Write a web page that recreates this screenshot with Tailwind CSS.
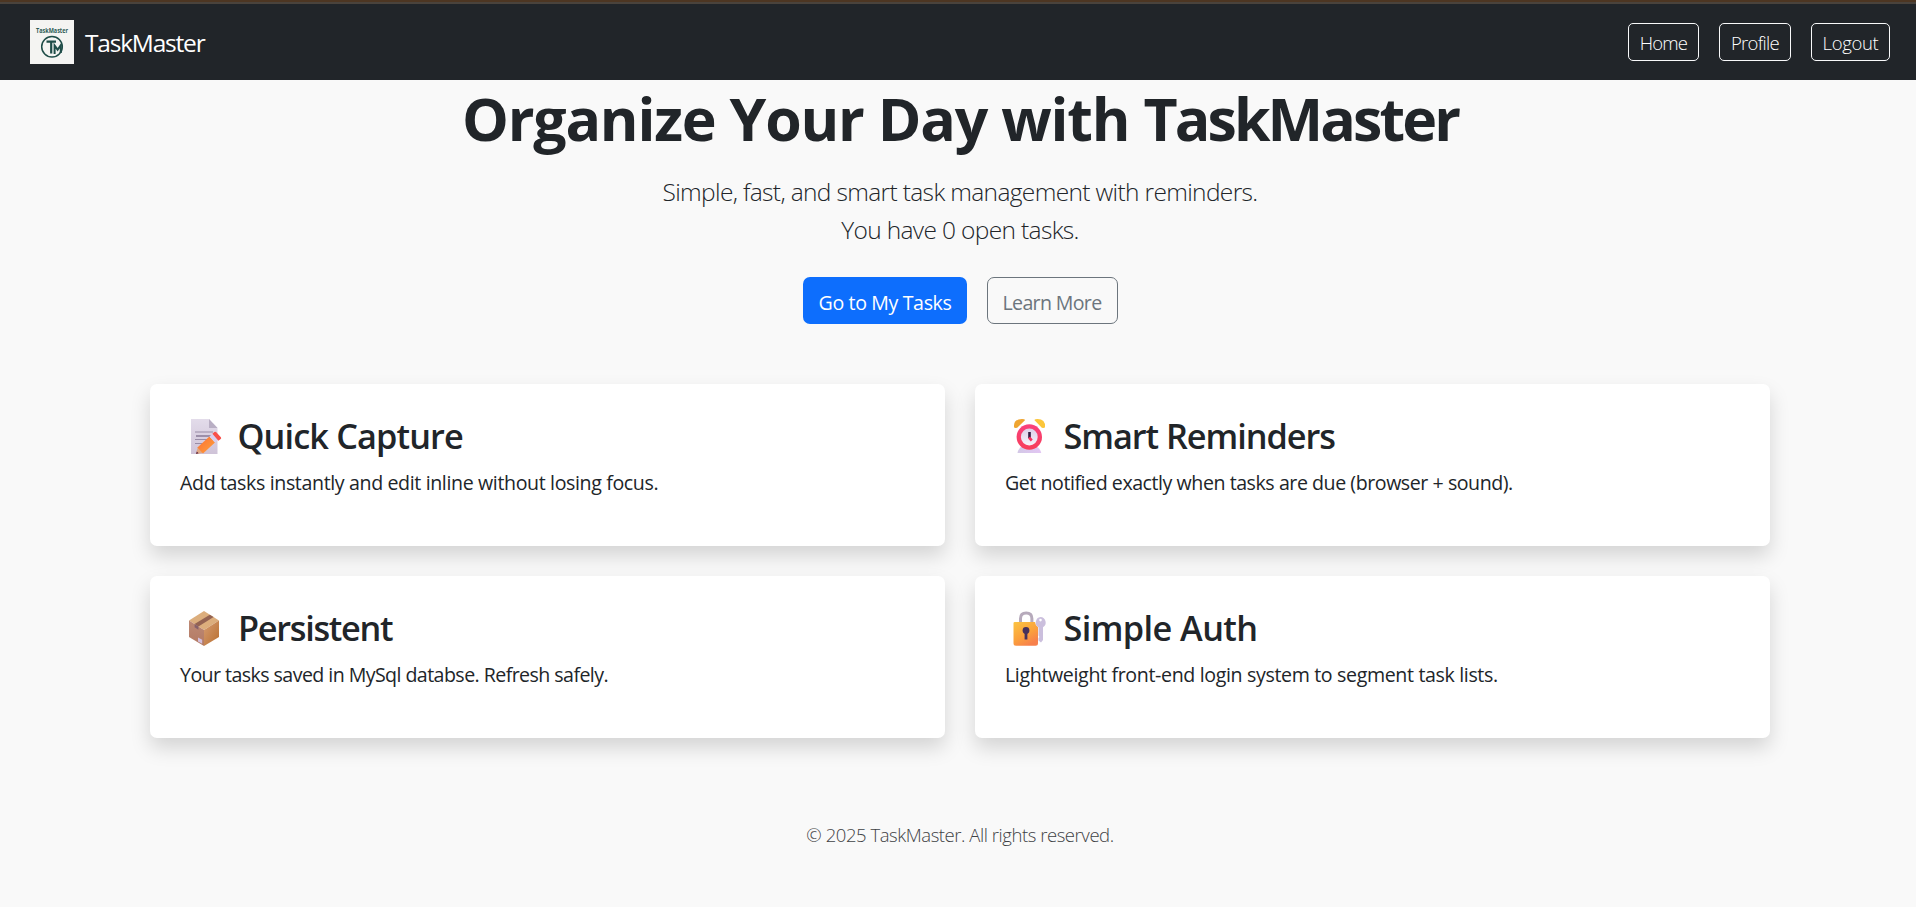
<!DOCTYPE html>
<html lang="en">
<head>
<meta charset="utf-8">
<title>TaskMaster</title>
<script src="https://cdn.jsdelivr.net/npm/@tailwindcss/browser@4"></script>
</head>
<body class="h-[907px] overflow-hidden bg-[#f9f9f9] font-['Open_Sans','Segoe_UI',sans-serif] text-[#212529]">

<header class="h-20 bg-[#212529]">
  <div class="h-0.5 bg-[#4d3622]"></div>
  <div class="h-0.5 bg-[#4a433c]"></div>
  <nav class="flex h-[76px] items-center justify-between pl-[30px] pr-[26px] text-white">
    <a class="flex items-center gap-[11px]">
      <svg class="size-11" viewBox="0 0 44 44">
        <rect width="44" height="44" fill="#f4f4f2"/>
        <text x="6" y="13" font-family="Open Sans" font-weight="700" font-size="6.2" textLength="32" lengthAdjust="spacingAndGlyphs" fill="#2c5a55">TaskMaster</text>
        <circle cx="22" cy="26.700" r="10.300" fill="none" stroke="#1f4d48" stroke-width="1.500"/>
        <path d="M16.500 21.700h9.500M21.200 21.500v12" fill="none" stroke="#1f4d48" stroke-width="2.200"/>
        <path d="M24.600 34V25.500l3 4.200 3.200-4.600V33" fill="none" stroke="#1f4d48" stroke-width="2"/>
      </svg>
      <span class="pt-px text-[24.5px] leading-[38px] tracking-[-1.2px]">TaskMaster</span>
    </a>
    <div class="flex items-center gap-5 text-[18.5px] font-light">
      <a class="flex h-[38px] w-[71px] items-center justify-center rounded-[5px] border border-[#f8f9fa] pt-px tracking-[-0.832px]">Home</a>
      <a class="flex h-[38px] w-[72px] items-center justify-center rounded-[5px] border border-[#f8f9fa] pt-px tracking-[-0.715px]">Profile</a>
      <a class="flex h-[38px] w-[79px] items-center justify-center rounded-[5px] border border-[#f8f9fa] pt-px tracking-[-0.343px]">Logout</a>
    </div>
  </nav>
</header>

<main class="w-[1920px]">
  <section class="flex flex-col items-center pt-0.5">
    <h1 class="text-[59px] font-bold leading-[72px] tracking-[-1.2px]">Organize Your Day with <span class="tracking-[-2.9px]">TaskMaster</span></h1>
    <p class="mt-[19px] text-center text-[24.5px] font-light leading-[38px] tracking-[-0.65px]">Simple, fast, and smart task management with reminders.<br>You have 0 open tasks.</p>
    <div class="mt-7 flex gap-5 text-[19.6px]">
      <a class="flex h-[47px] w-[164px] items-center justify-center rounded-[7px] bg-[#0d6efd] pl-px pt-1 tracking-[-0.371px] text-white">Go to My Tasks</a>
      <a class="flex h-[47px] w-[131px] items-center justify-center rounded-[7px] border border-[#6c757d] pt-1 tracking-[-0.66px] text-[#6c757d]">Learn More</a>
    </div>
  </section>

  <section class="ml-[150px] mt-[60px] grid w-[1620px] grid-cols-2 gap-[30px]">
    <article class="h-[162px] rounded-[7px] bg-white px-[30px] pt-[31px] shadow-[0_10px_20px_rgba(0,0,0,0.15)]">
      <h3 class="flex h-[42px] items-center gap-[7.5px] text-[34.3px] font-semibold leading-[42px] tracking-[-0.881px]">
        <svg class="h-[42px] w-[50px]" viewBox="0 0 50 42">
          <defs>
            <linearGradient id="page" x1="0" y1="0" x2="0" y2="1"><stop offset="0" stop-color="#e3dcea"/><stop offset="1" stop-color="#cfc3d8"/></linearGradient>
            <linearGradient id="pen" x1="0" y1="0" x2="1" y2="1"><stop offset="0" stop-color="#fb6f33"/><stop offset="1" stop-color="#ffa23c"/></linearGradient>
          </defs>
          <path d="M11 4h18l8.500 9v26H11z" fill="url(#page)"/>
          <path d="M29 4l8.500 9H29z" fill="#b9afc4"/>
          <path d="M15 17h18M15 24.500h14M15 28.500h10" stroke="#998ca6" stroke-width="1"/>
          <path d="M16 21h16" stroke="#998ca6" stroke-width="1.900"/>
          <path d="M16 39l1.800-7 5.500 6z" fill="#e0a884"/>
          <path d="M16 39l.8-2.400 1.800 1.600z" fill="#5b2340"/>
          <path d="M17.400 32.400L29.400 21.400l5.600 6.200-12 11z" fill="url(#pen)"/>
          <path d="M29.400 21.400l3-2.700 5.600 6.200-3 2.700z" fill="#d9cfee"/>
          <path d="M32.400 18.700l2-1.700q1-.8 1.900.2l4.600 5q.7 1-.2 1.700l-2.300 1.800z" fill="#f8504a"/>
        </svg>
        <span>Quick Capture</span>
      </h3>
      <p class="mt-[11px] text-[19.6px] leading-[30px] tracking-[-0.371px]">Add tasks instantly and edit inline without losing focus.</p>
    </article>

    <article class="h-[162px] rounded-[7px] bg-white px-[30px] pt-[31px] shadow-[0_10px_20px_rgba(0,0,0,0.15)]">
      <h3 class="flex h-[42px] items-center gap-[9.5px] text-[34.3px] font-semibold leading-[42px] tracking-[-1.043px]">
        <svg class="-ml-px h-[42px] w-[50px]" viewBox="0 0 50 42">
          <defs>
            <linearGradient id="base" x1="0" y1="0" x2="1" y2="0"><stop offset="0" stop-color="#d3c8e6"/><stop offset="1" stop-color="#e2c6f3"/></linearGradient>
            <linearGradient id="ring" x1="0" y1="0" x2="0" y2="1"><stop offset="0" stop-color="#f9407c"/><stop offset="1" stop-color="#f73e5a"/></linearGradient>
            <linearGradient id="face" x1="0" y1="0" x2="0" y2="1"><stop offset="0" stop-color="#dcd0e8"/><stop offset="1" stop-color="#f7f3fa"/></linearGradient>
          </defs>
          <path d="M13.500 37.500q1-4.500 5-6.500h13q4.500 2 5.700 6.500 0 .5-.7.500H14.200q-.7 0-.7-.5z" fill="url(#base)"/>
          <path d="M10 12q-.5-8 8-8 2.500 0 3.200 1l-8 7.800q-3.200.4-3.200-.8z" fill="#efa531"/>
          <path d="M41 12q.5-8-7.500-8-2.500 0-3.200 1l7.500 7.800q3.200.4 3.200-.8z" fill="#fbc63a"/>
          <circle cx="25.300" cy="22" r="12.700" fill="url(#ring)"/>
          <circle cx="25.300" cy="22" r="8.400" fill="url(#face)"/>
          <path d="M25.500 17v6" stroke="#321b41" stroke-width="2.600"/>
          <path d="M25 22.500l2.800 3" stroke="#f8315f" stroke-width="2.600"/>
        </svg>
        <span>Smart Reminders</span>
      </h3>
      <p class="mt-[11px] text-[19.6px] leading-[30px] tracking-[-0.45px]">Get notified exactly when tasks are due (browser + sound).</p>
    </article>

    <article class="h-[162px] rounded-[7px] bg-white px-[30px] pt-[31px] shadow-[0_10px_20px_rgba(0,0,0,0.15)]">
      <h3 class="flex h-[42px] items-center gap-2 text-[34.3px] font-semibold leading-[42px] tracking-[-1.302px]">
        <svg class="h-[42px] w-[50px]" viewBox="0 0 50 42">
          <defs>
            <linearGradient id="boxl" x1="0" y1="0" x2="0" y2="1"><stop offset="0" stop-color="#bd8975"/><stop offset="1" stop-color="#b37a63"/></linearGradient>
            <linearGradient id="boxr" x1="0" y1="0" x2="1" y2="1"><stop offset="0" stop-color="#d59c72"/><stop offset="1" stop-color="#b96f2f"/></linearGradient>
          </defs>
          <path d="M24 4l15 9.500L24 23 9 13.500z" fill="#dcae7d"/>
          <path d="M9 13.500L24 23v16L9 30z" fill="url(#boxl)"/>
          <path d="M39 13.500L24 23v16l15-9z" fill="url(#boxr)"/>
          <path d="M29.800 7.700l3.800 2.400L18.400 19.500l-3.800-2.400z" fill="#946352"/>
          <path d="M14.600 17.100l3.800 2.400v3.200l-3.800-2.400z" fill="#86606a"/>
          <path d="M18 30.500l4.200 2.300v4L18 34.500z" fill="#d3bfdc"/>
        </svg>
        <span>Persistent</span>
      </h3>
      <p class="mt-[11px] text-[19.6px] leading-[30px] tracking-[-0.565px]">Your tasks saved in MySql databse. Refresh safely.</p>
    </article>

    <article class="h-[162px] rounded-[7px] bg-white px-[30px] pt-[31px] shadow-[0_10px_20px_rgba(0,0,0,0.15)]">
      <h3 class="flex h-[42px] items-center gap-[9.5px] text-[34.3px] font-semibold leading-[42px] tracking-[-0.595px]">
        <svg class="-ml-px h-[42px] w-[50px]" viewBox="0 0 50 42">
          <defs>
            <linearGradient id="lock" x1="0" y1="0" x2=".6" y2="1"><stop offset="0" stop-color="#fbc443"/><stop offset=".6" stop-color="#fba13c"/><stop offset="1" stop-color="#f7804c"/></linearGradient>
          </defs>
          <path d="M16.500 17v-5.500q0-5.500 5.700-5.500t5.700 5.500V17" fill="none" stroke="#b6aabb" stroke-width="3"/>
          <path d="M9.500 16.300q0-1.300 1.300-1.300H31q.2 3 3 5V36.200q0 2.500-2.500 2.500H12q-2.500 0-2.500-2.500z" fill="url(#lock)"/>
          <circle cx="22" cy="23.500" r="3.400" fill="#46305c"/>
          <path d="M22 24v8.500" stroke="#46305c" stroke-width="2.800"/>
          <path fill-rule="evenodd" d="M36.500 10a5.500 5.500 0 0 1 2.500 10.200V33l-2 2.500-2.500-2V31l1-1-1-1.500v-8.300A5.500 5.500 0 0 1 36.500 10zm0 1.800a1.300 1.300 0 1 0 0 2.600 1.300 1.300 0 0 0 0-2.600z" fill="#cbbfdd"/>
        </svg>
        <span>Simple Auth</span>
      </h3>
      <p class="mt-[11px] text-[19.6px] leading-[30px] tracking-[-0.354px]">Lightweight front-end login system to segment task lists.</p>
    </article>
  </section>
</main>

<footer class="mt-[82px] w-[1920px] text-center text-[18.5px] font-light leading-[30px] tracking-[-0.447px] text-[#3f4245]">© 2025 TaskMaster. All rights reserved.</footer>
</body>
</html>
